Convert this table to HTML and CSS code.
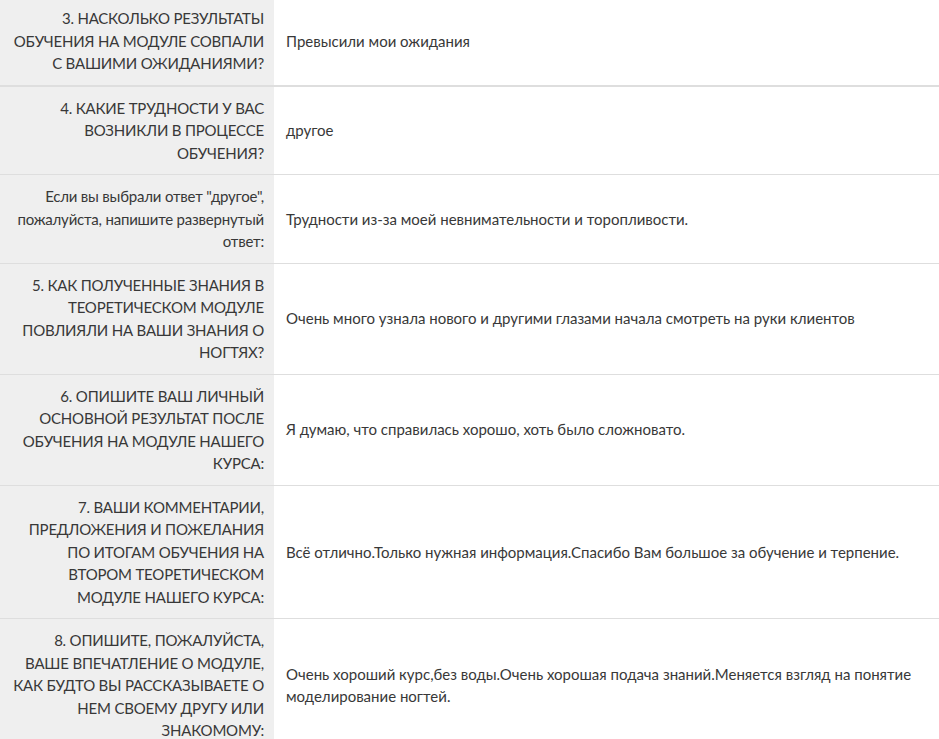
FILE: index.html
```html
<!DOCTYPE html>
<html lang="ru">
<head>
  <meta charset="UTF-8">
  <title>Анкета по модулю</title>
  <link rel="stylesheet" href="styles.css">
</head>
<body>
  <table class="anketa">
    <tbody>
      <tr class="first">
        <th>3. Насколько результаты<br>обучения на модуле совпали<br>с вашими ожиданиями?</th>
        <td>Превысили мои ожидания</td>
      </tr>
      <tr>
        <th>4. Какие трудности у вас<br>возникли в процессе<br>обучения?</th>
        <td>другое</td>
      </tr>
      <tr>
        <th class="plain">Если вы выбрали ответ "другое",<br>пожалуйста, напишите развернутый<br>ответ:</th>
        <td>Трудности из-за моей невнимательности и торопливости.</td>
      </tr>
      <tr>
        <th>5. Как полученные знания в<br>теоретическом модуле<br>повлияли на ваши знания о<br>ногтях?</th>
        <td>Очень много узнала нового и другими глазами начала смотреть на руки клиентов</td>
      </tr>
      <tr>
        <th>6. Опишите ваш личный<br>основной результат после<br>обучения на модуле нашего<br>курса:</th>
        <td>Я думаю, что справилась хорошо, хоть было сложновато.</td>
      </tr>
      <tr>
        <th>7. Ваши комментарии,<br>предложения и пожелания<br>по итогам обучения на<br>втором теоретическом<br>модуле нашего курса:</th>
        <td>Всё отлично.Только нужная информация.Спасибо Вам большое за обучение и терпение.</td>
      </tr>
      <tr>
        <th>8. Опишите, пожалуйста,<br>ваше впечатление о модуле,<br>как будто вы рассказываете о<br>нем своему другу или<br>знакомому:</th>
        <td>Очень хороший курс,без воды.Очень хорошая подача знаний.Меняется взгляд на понятие моделирование ногтей.</td>
      </tr>
    </tbody>
  </table>
</body>
</html>
```

FILE: styles.css
```css
body {
  margin: 0;
  background: #fff;
  font-family: Lato, "Open Sans", Arial, sans-serif;
  font-size: 15px;
  line-height: 22.5px;
  color: #383838;
}
.anketa {
  width: 100%;
  border-collapse: collapse;
  table-layout: fixed;
  margin-top: -3px;
}
.anketa tr {
  border-bottom: 1px solid #dedede;
}
.anketa tr.first {
  border-bottom: 2px solid #dedede;
}
.anketa th {
  width: 258px;
  padding: 10px 10px 10px 6px;
  background: #efefef;
  text-align: right;
  font-weight: normal;
  text-transform: uppercase;
  letter-spacing: -0.2px;
  white-space: nowrap;
  vertical-align: middle;
}
.anketa th.plain {
  text-transform: none;
}
.anketa td {
  padding: 10px 12px;
  vertical-align: middle;
}
```
